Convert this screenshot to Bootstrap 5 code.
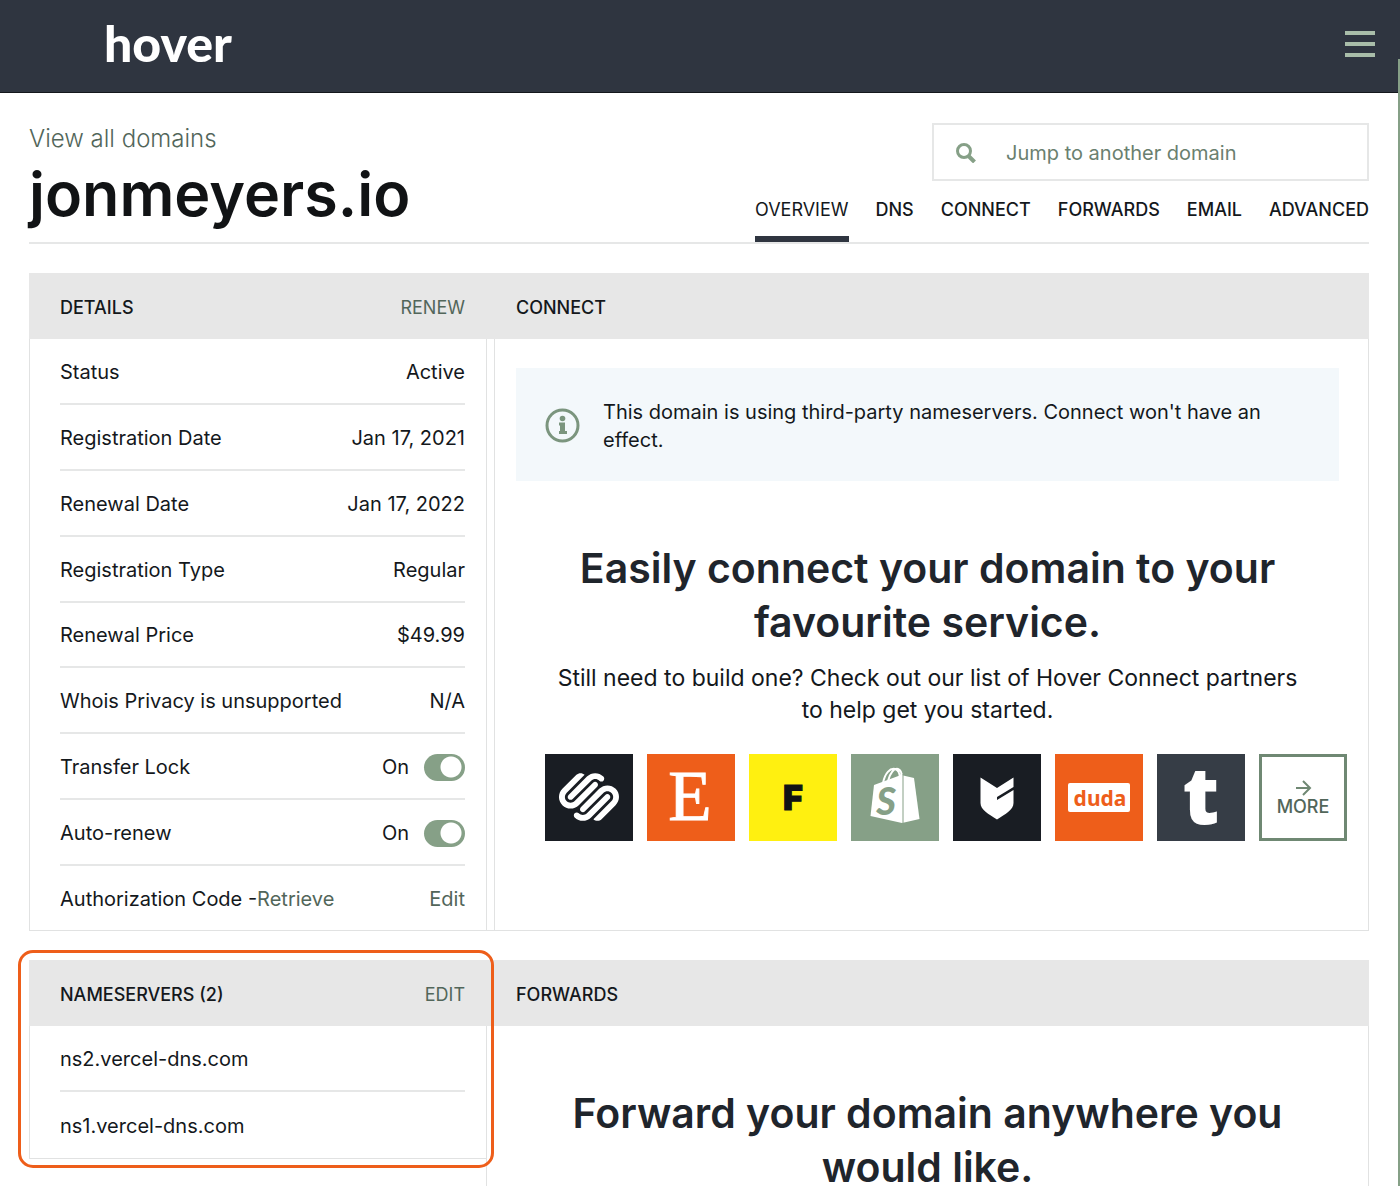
<!DOCTYPE html>
<html lang="en">
<head>
<meta charset="utf-8">
<meta name="viewport" content="width=device-width, initial-scale=1">
<title>jonmeyers.io – Hover</title>
<link href="https://cdn.jsdelivr.net/npm/bootstrap@5.3.0/dist/css/bootstrap.min.css" rel="stylesheet">
<style>
:root{--navy:#2f3540;--sage:#86a087;--moss:#52665a;--line:#e6e7e7;--ink:#14181c;--orange:#ee5e1a}
body{font-family:Inter,"Liberation Sans",sans-serif;font-size:20px;line-height:28px;color:var(--ink);background:#fff}
a{color:var(--moss);text-decoration:none}
a:hover{color:var(--navy)}
.topbar{height:93px;background:var(--navy);border-bottom:1px solid #14181c;padding:0 25px 4px 104px}
.logo{font-family:Lato,sans-serif;font-weight:900;font-size:50px;line-height:60px;color:#fff;padding-bottom:2px}
.logo:hover{color:#fff}
.burger{width:30px;height:26px;padding:0;border:0;background:none;display:block}
.burger svg{display:block}
.thumb{position:absolute;top:59px;right:0;bottom:0;width:2px;background:var(--sage)}
.page{padding:30px 31px 0 29px}
.masthead{border-bottom:2px solid var(--line);height:121px;margin-bottom:29px}
.crumb{font-size:24px;line-height:32px;font-weight:300}
h1{font-size:61px;line-height:76px;font-weight:600;margin:1px 0 0;color:#111315}
.finder{width:437px;height:58px;border:2px solid var(--line);padding:0 21px}
.finder input{border:0;padding:2px 0 0;font-size:20px;outline:0;color:var(--ink);margin-left:29px;background:none}
.finder input::placeholder{color:#6a7f6f;opacity:1}
.tabs{gap:27px;font-size:18px;line-height:24px}
.tabs a{color:var(--ink);font-weight:500;padding:17px 0 14px;border-bottom:6px solid transparent}
.tabs a.active{font-weight:400;border-color:var(--navy)}
.bar{background:#e7e7e7;height:66px;font-size:18px;line-height:24px;padding-top:3px}
.bar h2{font-size:18px;line-height:24px;font-weight:500;margin:0}
.side{width:458px;flex:none}
.side .bar{padding-left:31px;padding-right:22px}
.main{flex:1 1 0;min-width:0}
.main .bar{padding-left:22px}
.main.wide{margin-left:-1px}
.main.wide .bar{padding-left:30px}
.panel{border:1px solid #e1e2e2;border-top:0}
.side .panel{padding:0 21px 0 30px}
.gutter{width:7px;flex:none;border-bottom:1px solid #e1e2e2}
.item{border-bottom:2px solid var(--line);min-height:66px;padding-top:2px}
.spread .item{min-height:64px}
.item:last-child{border-bottom:0}
.form-switch.toggle{padding:0;margin:0;min-height:0;gap:15px}
.form-switch.toggle .form-check-input{width:41px;height:27px;margin:0;float:none;border:0;border-radius:14px;background:radial-gradient(circle at 27px 13px,#fff 10px,var(--sage) 11px)}
.connect{padding:29px 29px 89px 21px}
.notice{background:#f3f8fb;height:113px;padding:2px 29px 0;gap:23px}
.headline{font-size:41px;line-height:54px;font-weight:600;text-align:center;color:#1f252c;margin:0}
.connect .headline{padding:60px 50px 13px}
.forward .headline{padding:60px 50px 40px}
.blurb{font-size:23px;line-height:32px;text-align:center;margin:0 34px 28px}
.tiles{gap:14px;padding-left:29px}
.tile{width:88px;height:87px;flex:none}
.tile svg{display:block;overflow:visible}
.tile.more{border:3px solid #6f8873;font-size:18px;line-height:20px;font-weight:500;color:var(--moss)}
.marked{position:absolute;inset:-10px -7px -9px -11px;border:3px solid var(--orange);border-radius:15px;pointer-events:none;z-index:1}
</style>
<script src="https://cdn.jsdelivr.net/npm/bootstrap@5.3.0/dist/js/bootstrap.bundle.min.js"></script>
</head>
<body class="vh-100 overflow-hidden position-relative">
<header class="topbar d-flex align-items-center justify-content-between">
  <a class="logo" href="#">hover</a>
  <button class="burger" type="button" aria-label="Menu"><svg width="30" height="26" overflow="visible"><path d="M0 2h30M0 13h30M0 24h30" stroke="#a9bda9" stroke-width="4"/></svg></button>
</header>
<div class="thumb"></div>
<main class="page">
  <div class="masthead d-flex justify-content-between">
    <div>
      <a class="crumb d-block" href="#">View all domains</a>
      <h1>jonmeyers.io</h1>
    </div>
    <div class="d-flex flex-column align-items-end">
      <div class="finder d-flex align-items-center">
        <svg width="22" height="22" viewBox="0 0 22 22" fill="none" stroke="#86a087"><circle cx="9" cy="10" r="6.500" stroke-width="3"/><path d="M13.500 15l6 6" stroke-width="4"/></svg>
        <input class="flex-fill" type="text" aria-label="Jump to another domain" placeholder="Jump to another domain">
      </div>
      <nav class="tabs d-flex">
        <a class="active" href="#">OVERVIEW</a><a href="#">DNS</a><a href="#">CONNECT</a><a href="#">FORWARDS</a><a href="#">EMAIL</a><a href="#">ADVANCED</a>
      </nav>
    </div>
  </div>

  <div class="d-flex">
    <section class="side d-flex flex-column">
      <div class="bar d-flex align-items-center justify-content-between"><h2>DETAILS</h2><a href="#">RENEW</a></div>
      <div class="panel spread flex-fill d-flex flex-column">
        <div class="item flex-fill d-flex align-items-center justify-content-between"><span>Status</span><span>Active</span></div>
        <div class="item flex-fill d-flex align-items-center justify-content-between"><span>Registration Date</span><span>Jan 17, 2021</span></div>
        <div class="item flex-fill d-flex align-items-center justify-content-between"><span>Renewal Date</span><span>Jan 17, 2022</span></div>
        <div class="item flex-fill d-flex align-items-center justify-content-between"><span>Registration Type</span><span>Regular</span></div>
        <div class="item flex-fill d-flex align-items-center justify-content-between"><span>Renewal Price</span><span>$49.99</span></div>
        <div class="item flex-fill d-flex align-items-center justify-content-between"><span>Whois Privacy is unsupported</span><span>N/A</span></div>
        <div class="item flex-fill d-flex align-items-center justify-content-between"><label for="lock">Transfer Lock</label><span class="form-check form-switch toggle d-flex align-items-center"><span>On</span><input class="form-check-input" type="checkbox" role="switch" id="lock" checked></span></div>
        <div class="item flex-fill d-flex align-items-center justify-content-between"><label for="auto">Auto-renew</label><span class="form-check form-switch toggle d-flex align-items-center"><span>On</span><input class="form-check-input" type="checkbox" role="switch" id="auto" checked></span></div>
        <div class="item flex-fill d-flex align-items-center justify-content-between"><span>Authorization Code -<a href="#">Retrieve</a></span><a href="#">Edit</a></div>
      </div>
    </section>
    <div class="gutter"><div class="bar"></div></div>
    <section class="main">
      <div class="bar d-flex align-items-center"><h2>CONNECT</h2></div>
      <div class="panel connect">
        <div class="notice d-flex align-items-center">
          <svg class="flex-shrink-0" width="35" height="35" viewBox="0 0 35 35"><circle cx="17.500" cy="17.500" r="15.500" fill="none" stroke="#7b957e" stroke-width="3"/><circle cx="17.500" cy="10.500" r="2.800" fill="#7b957e"/><path d="M14 14.500h6v8.500h2v3h-8v-3h1v-5.500h-1z" fill="#7b957e"/></svg>
          <span>This domain is using third-party nameservers. Connect won't have an effect.</span>
        </div>
        <h3 class="headline">Easily connect your domain to your favourite service.</h3>
        <p class="blurb">Still need to build one? Check out our list of Hover Connect partners to help get you started.</p>
        <div class="tiles d-flex">
          <a class="tile" href="#" aria-label="Squarespace"><svg width="88" height="87"><rect width="88" height="87" fill="#191d23"/><path fill="#fff" transform="translate(14 13) scale(2.500)" d="M22.655 8.719c-1.802-1.801-4.726-1.801-6.564 0l-7.351 7.350c-.45.45-.45 1.200 0 1.650.45.449 1.200.449 1.650 0l7.351-7.351c.899-.899 2.362-.899 3.264 0 .9.9.9 2.364 0 3.264l-7.239 7.239c.9.899 2.362.899 3.263 0l5.589-5.589c1.836-1.838 1.836-4.763.037-6.563zm-2.475 2.437c-.451-.45-1.201-.45-1.650 0l-7.354 7.389c-.9.899-2.361.899-3.262 0-.45-.45-1.200-.45-1.650 0s-.45 1.200 0 1.649c1.801 1.801 4.726 1.801 6.564 0l7.351-7.350c.449-.487.449-1.239.001-1.688zm-2.439-7.350c-1.801-1.801-4.726-1.801-6.564 0l-7.351 7.351c-.45.449-.45 1.199 0 1.649s1.200.45 1.650 0l7.395-7.351c.9-.899 2.371-.899 3.270 0 .451.45 1.201.45 1.650 0 .421-.487.421-1.199-.05-1.649zm-2.475 2.474c-.45-.449-1.200-.449-1.650 0l-7.351 7.351c-.899.9-2.361.9-3.263 0-.9-.9-.9-2.361 0-3.263l7.239-7.239c-.9-.9-2.362-.9-3.263 0L1.350 8.719c-1.800 1.800-1.800 4.762 0 6.563 1.801 1.800 4.725 1.800 6.563 0l7.351-7.351c.451-.488.451-1.238.002-1.651z"/></svg></a>
          <a class="tile" href="#" aria-label="Etsy"><svg width="88" height="87"><rect width="88" height="87" fill="#ee5e1a"/><text x="43" y="66" text-anchor="middle" font-family="Liberation Serif,serif" font-size="71" fill="#fff" stroke="#fff">E</text></svg></a>
          <a class="tile" href="#" aria-label="Format"><svg width="88" height="87"><rect width="88" height="87" fill="#fff010"/><text x="44" y="56" text-anchor="middle" font-family="Inter,sans-serif" font-weight="900" font-size="34" fill="#111315" stroke="#111315">F</text></svg></a>
          <a class="tile" href="#" aria-label="Shopify"><svg width="88" height="87"><rect width="88" height="87" fill="#86a087"/><path fill="#fff" d="M19.500 62L23 31l27-10 13 3 5.500 41L51 69z"/><path d="M32 29c2-10 7-15 12-14 4 1 5 5 5 10M37 27c2-8 6-13 10-12 3 1 4 5 4 9" fill="none" stroke="#fff" stroke-width="2"/><path d="M52 20v50" stroke="#86a087"/><text x="35" y="61" text-anchor="middle" font-family="Lato,sans-serif" font-weight="900" font-style="italic" font-size="38" fill="#86a087">S</text></svg></a>
          <a class="tile" href="#" aria-label="Big Cartel"><svg width="88" height="87"><rect width="88" height="87" fill="#191d23"/><path fill="#fff" d="M27.500 23.500L44 34l16.500-10.500V33L44 43v3l16.500-10v13c0 7-8 11-16.500 16.500C35.500 60 27.500 56 27.500 49z"/></svg></a>
          <a class="tile" href="#" aria-label="Duda"><svg width="88" height="87"><rect width="88" height="87" fill="#ee5e1a"/><rect x="13" y="29" width="62" height="29" rx="2" fill="#fff"/><text x="45" y="52" text-anchor="middle" font-family="Noto Sans,sans-serif" font-weight="700" font-size="21" fill="#ee5e1a">duda</text></svg></a>
          <a class="tile" href="#" aria-label="Tumblr"><svg width="88" height="87"><rect width="88" height="87" fill="#363d46"/><text x="44" y="70" text-anchor="middle" font-family="Open Sans,sans-serif" font-weight="800" font-size="80" fill="#fff">t</text></svg></a>
          <a class="tile more d-flex flex-column align-items-center justify-content-center" href="#"><svg width="17" height="18" fill="none" stroke="#6f8873" stroke-width="2"><path d="M1 9h14M8 2l7 7-7 7"/></svg><span>MORE</span></a>
        </div>
      </div>
    </section>
  </div>

  <div class="d-flex align-items-start" style="margin-top:29px">
    <section class="side position-relative">
      <div class="bar d-flex align-items-center justify-content-between"><h2>NAMESERVERS (2)</h2><a href="#">EDIT</a></div>
      <div class="panel">
        <div class="item d-flex align-items-center">ns2.vercel-dns.com</div>
        <div class="item d-flex align-items-center">ns1.vercel-dns.com</div>
      </div>
      <div class="marked"></div>
    </section>
    <section class="main wide">
      <div class="bar d-flex align-items-center"><h2>FORWARDS</h2></div>
      <div class="panel forward">
        <h3 class="headline">Forward your domain anywhere you would like.</h3>
      </div>
    </section>
  </div>
</main>
</body>
</html>
